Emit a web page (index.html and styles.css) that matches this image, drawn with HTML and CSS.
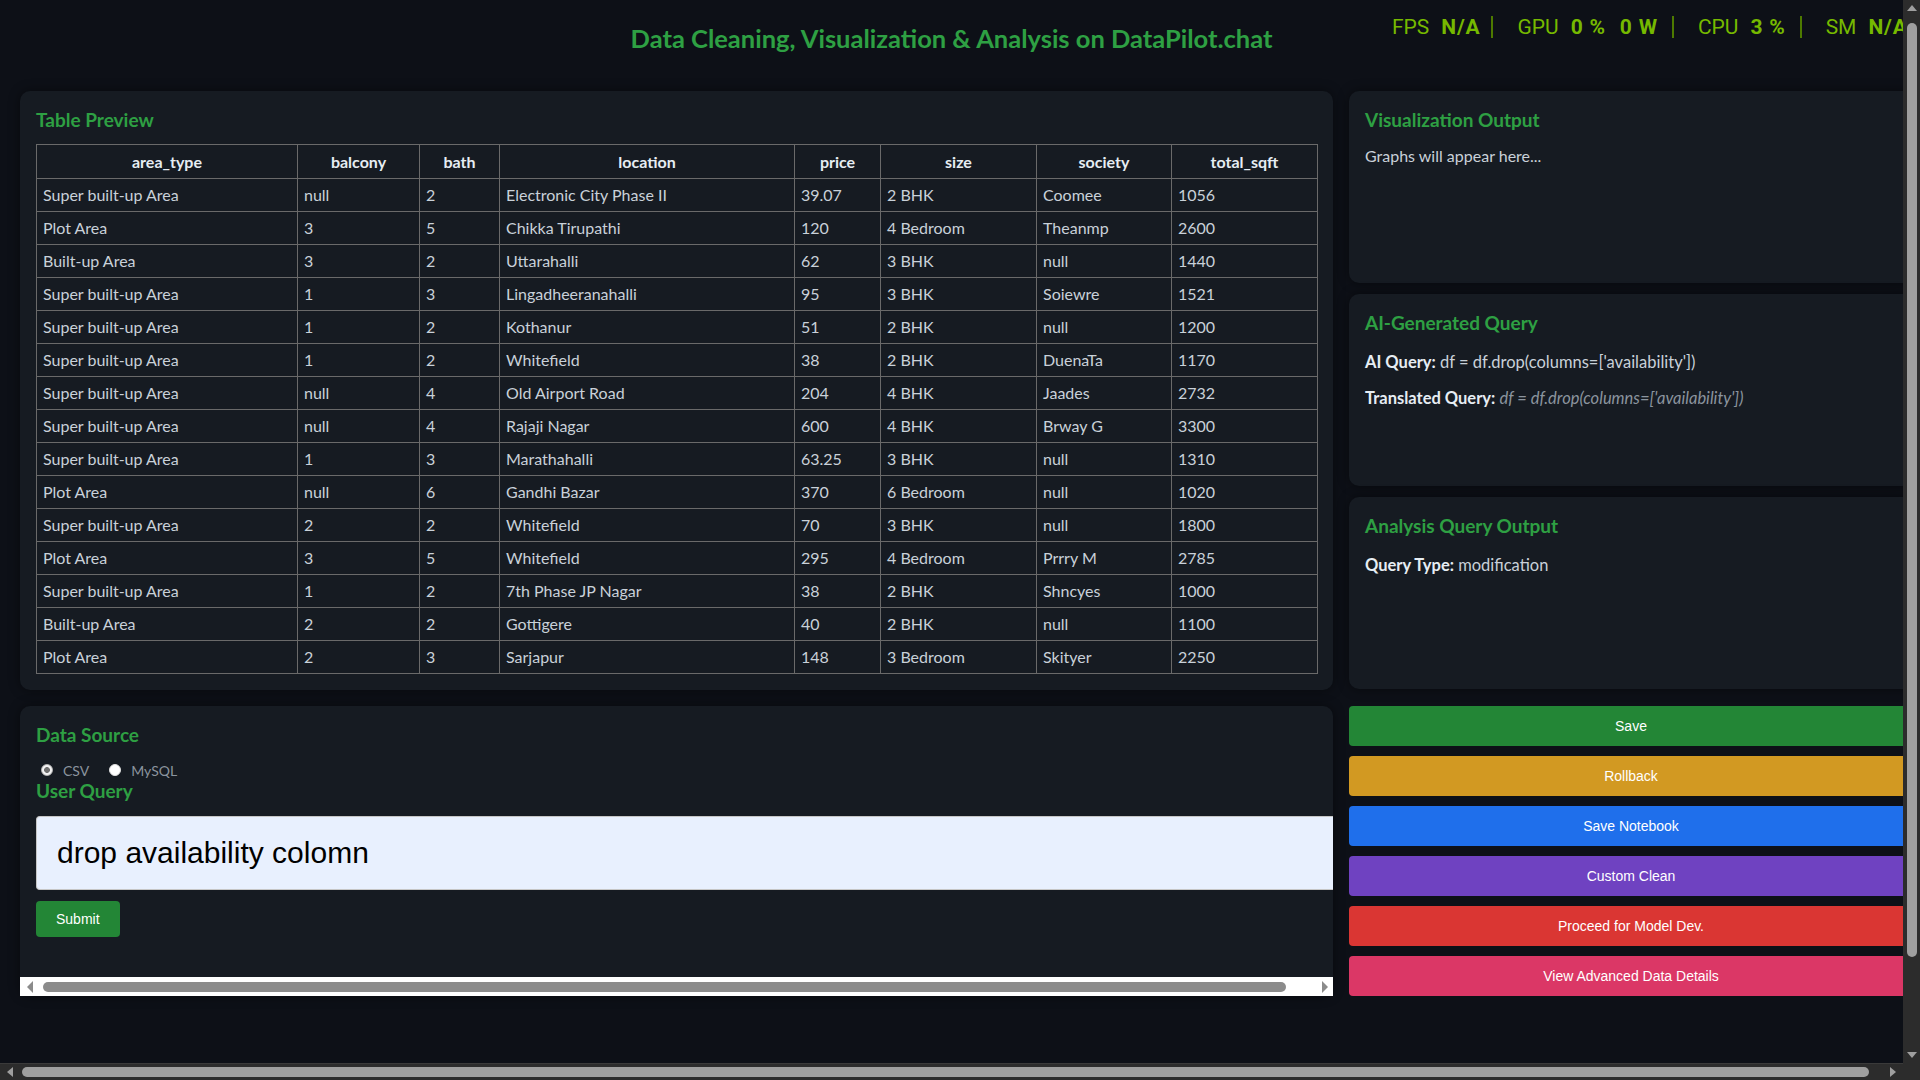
FILE: index.html
```html
<!DOCTYPE html>
<html lang="en">
<head>
<meta charset="utf-8">
<title>DataPilot</title>
<link rel="stylesheet" href="styles.css">
</head>
<body>
<div class="overlay">
  <span class="lbl">FPS</span><span class="val">N/A</span><span class="sep sep-first"></span>
  <span class="lbl">GPU</span><span class="val">0 %</span><span class="val">0 W</span><span class="sep"></span>
  <span class="lbl">CPU</span><span class="val">3 %</span><span class="sep"></span>
  <span class="lbl">SM</span><span class="val">N/A</span>
</div>
<header class="header">
  <h1 class="page-title">Data Cleaning, Visualization &amp; Analysis on DataPilot.chat</h1>
</header>
<main class="main">
  <div class="left-col">
    <section class="card table-card">
      <h3 class="card-title">Table Preview</h3>
      <table class="data-table">
        <colgroup>
          <col class="c1"><col class="c2"><col class="c3"><col class="c4"><col class="c5"><col class="c6"><col class="c7"><col class="c8">
        </colgroup>
        <thead>
          <tr><th>area_type</th><th>balcony</th><th>bath</th><th>location</th><th>price</th><th>size</th><th>society</th><th>total_sqft</th></tr>
        </thead>
        <tbody>
          <tr><td>Super built-up Area</td><td>null</td><td>2</td><td>Electronic City Phase II</td><td>39.07</td><td>2 BHK</td><td>Coomee</td><td>1056</td></tr>
          <tr><td>Plot Area</td><td>3</td><td>5</td><td>Chikka Tirupathi</td><td>120</td><td>4 Bedroom</td><td>Theanmp</td><td>2600</td></tr>
          <tr><td>Built-up Area</td><td>3</td><td>2</td><td>Uttarahalli</td><td>62</td><td>3 BHK</td><td>null</td><td>1440</td></tr>
          <tr><td>Super built-up Area</td><td>1</td><td>3</td><td>Lingadheeranahalli</td><td>95</td><td>3 BHK</td><td>Soiewre</td><td>1521</td></tr>
          <tr><td>Super built-up Area</td><td>1</td><td>2</td><td>Kothanur</td><td>51</td><td>2 BHK</td><td>null</td><td>1200</td></tr>
          <tr><td>Super built-up Area</td><td>1</td><td>2</td><td>Whitefield</td><td>38</td><td>2 BHK</td><td>DuenaTa</td><td>1170</td></tr>
          <tr><td>Super built-up Area</td><td>null</td><td>4</td><td>Old Airport Road</td><td>204</td><td>4 BHK</td><td>Jaades</td><td>2732</td></tr>
          <tr><td>Super built-up Area</td><td>null</td><td>4</td><td>Rajaji Nagar</td><td>600</td><td>4 BHK</td><td>Brway G</td><td>3300</td></tr>
          <tr><td>Super built-up Area</td><td>1</td><td>3</td><td>Marathahalli</td><td>63.25</td><td>3 BHK</td><td>null</td><td>1310</td></tr>
          <tr><td>Plot Area</td><td>null</td><td>6</td><td>Gandhi Bazar</td><td>370</td><td>6 Bedroom</td><td>null</td><td>1020</td></tr>
          <tr><td>Super built-up Area</td><td>2</td><td>2</td><td>Whitefield</td><td>70</td><td>3 BHK</td><td>null</td><td>1800</td></tr>
          <tr><td>Plot Area</td><td>3</td><td>5</td><td>Whitefield</td><td>295</td><td>4 Bedroom</td><td>Prrry M</td><td>2785</td></tr>
          <tr><td>Super built-up Area</td><td>1</td><td>2</td><td>7th Phase JP Nagar</td><td>38</td><td>2 BHK</td><td>Shncyes</td><td>1000</td></tr>
          <tr><td>Built-up Area</td><td>2</td><td>2</td><td>Gottigere</td><td>40</td><td>2 BHK</td><td>null</td><td>1100</td></tr>
          <tr><td>Plot Area</td><td>2</td><td>3</td><td>Sarjapur</td><td>148</td><td>3 Bedroom</td><td>Skityer</td><td>2250</td></tr>
        </tbody>
      </table>
    </section>
    <section class="card source-card">
      <h3 class="card-title">Data Source</h3>
      <div class="radios">
        <label class="radio-label"><input type="radio" name="src" class="radio" checked> CSV</label>
        <label class="radio-label"><input type="radio" name="src" class="radio"> MySQL</label>
      </div>
      <h3 class="card-title">User Query</h3>
      <input class="query-input" type="text" value="drop availability colomn">
      <button class="submit-btn">Submit</button>
      <div class="hscroll">
        <svg class="arrow" width="8" height="12" viewBox="0 0 8 12"><path d="M7 0 L7 12 L1 6 Z" fill="#8b8b8b"/></svg>
        <div class="hscroll-track"><div class="inner-thumb"></div></div>
        <svg class="arrow" width="8" height="12" viewBox="0 0 8 12"><path d="M1 0 L1 12 L7 6 Z" fill="#8b8b8b"/></svg>
      </div>
    </section>
  </div>
  <div class="right-col">
    <section class="card side-card">
      <h3 class="card-title">Visualization Output</h3>
      <p class="vis-text">Graphs will appear here...</p>
    </section>
    <section class="card side-card">
      <h3 class="card-title">AI-Generated Query</h3>
      <p class="line first"><strong>AI Query:</strong> df = df.drop(columns=['availability'])</p>
      <p class="line"><strong>Translated Query:</strong> <em class="muted">df = df.drop(columns=['availability'])</em></p>
    </section>
    <section class="card side-card">
      <h3 class="card-title">Analysis Query Output</h3>
      <p class="line first"><strong>Query Type:</strong> modification</p>
    </section>
    <div class="actions">
      <button class="act act-save">Save</button>
      <button class="act act-rollback">Rollback</button>
      <button class="act act-notebook">Save Notebook</button>
      <button class="act act-custom">Custom Clean</button>
      <button class="act act-proceed">Proceed for Model Dev.</button>
      <button class="act act-advanced">View Advanced Data Details</button>
    </div>
  </div>
</main>

<div class="page-vscroll">
  <svg class="arrow" width="10" height="8" viewBox="0 0 10 8"><path d="M0 7 L10 7 L5 1 Z" fill="#9f9f9f"/></svg>
  <div class="vtrack"><div class="vthumb"></div></div>
  <svg class="arrow" width="10" height="8" viewBox="0 0 10 8"><path d="M0 1 L10 1 L5 7 Z" fill="#9f9f9f"/></svg>
</div>
<div class="page-hscroll">
  <svg class="arrow" width="8" height="10" viewBox="0 0 8 10"><path d="M7 0 L7 10 L1 5 Z" fill="#9f9f9f"/></svg>
  <div class="htrack"><div class="hthumb"></div></div>
  <svg class="arrow" width="8" height="10" viewBox="0 0 8 10"><path d="M1 0 L1 10 L7 5 Z" fill="#9f9f9f"/></svg>
</div>
<div class="scroll-corner"></div>
</body>
</html>
```
FILE: styles.css
```css
html {
  color-scheme: dark;
}

body {
  margin: 0;
  background: #0d1017;
  color: #c9d1d9;
  font-family: Lato, "Noto Sans", sans-serif;
  font-size: 16px;
  overflow: hidden;
  height: 1080px;
}

.overlay {
  position: absolute;
  top: 15px;
  left: 1392px;
  display: flex;
  align-items: center;
  font-family: Roboto, "DejaVu Sans", sans-serif;
  font-size: 21px;
  color: #76b900;
  white-space: nowrap;
  z-index: 5;
}

.overlay .lbl {
  margin-right: 12px;
}

.overlay .val {
  font-weight: 700;
  margin-right: 14px;
  letter-spacing: 0.8px;
}

.overlay .sep {
  width: 2px;
  height: 22px;
  background: #4d7a00;
  margin-right: 24px;
}

.overlay .sep-first {
  margin-left: -3px;
}

.header {
  padding-top: 18px;
  margin-right: 17px;
}

.page-title {
  margin: 0;
  text-align: center;
  color: #2ea043;
  font-size: 25.5px;
  line-height: 40px;
  font-weight: 700;
}

.main {
  display: grid;
  grid-template-columns: 1313px 564px;
  column-gap: 16px;
  width: max-content;
  padding: 33px 20px 20px;
}

.left-col {
  display: flex;
  flex-direction: column;
  gap: 16px;
}

.right-col {
  display: flex;
  flex-direction: column;
  gap: 11px;
}

.card {
  background: #161b22;
  border-radius: 10px;
  box-shadow: 0 0 12px rgba(0, 0, 0, 0.45);
  padding: 18px 16px 16px;
}

.card-title {
  margin: 0;
  color: #2ea043;
  font-size: 19px;
  line-height: 22px;
  font-weight: 700;
}

.table-card .card-title {
  margin-bottom: 13px;
}

.data-table {
  width: 100%;
  table-layout: fixed;
  border-collapse: collapse;
  border: 1px solid #6a6a6a;
}

.c1 { width: 261px; }
.c2 { width: 122px; }
.c3 { width: 80px; }
.c4 { width: 295px; }
.c5 { width: 86px; }
.c6 { width: 156px; }
.c7 { width: 135px; }
.c8 { width: 146px; }

.data-table th,
.data-table td {
  border: 1px solid #6a6a6a;
  padding: 6px 6px;
  line-height: 20px;
  font-size: 16px;
  white-space: nowrap;
  overflow: hidden;
}

.data-table th {
  color: #e6edf3;
  font-weight: 700;
  text-align: center;
  padding-top: 7px;
}

.data-table td {
  text-align: left;
}

.source-card {
  color-scheme: light;
  padding-bottom: 0;
}

.radios {
  display: flex;
  align-items: center;
  margin-top: 14px;
  height: 20px;
}

.radio-label {
  display: flex;
  align-items: center;
  color: #8b949e;
  font-size: 14px;
  margin-right: 15px;
}

.radio {
  appearance: none;
  width: 12px;
  height: 12px;
  margin: 0 10px 0 5px;
  border-radius: 50%;
  background: #ffffff;
  border: 1px solid #e0e0e0;
}

.radio:checked {
  background: radial-gradient(circle, #707070 0 2.6px, #f2f2f2 3.2px);
  border: 1px solid #b5b5b5;
}

.query-input {
  display: block;
  margin-top: 14px;
  width: calc(100% + 16px);
  height: 74px;
  box-sizing: border-box;
  padding: 0 20px;
  background: #e8f0fe;
  border: 1px solid #c6c6c6;
  border-right: none;
  border-radius: 4px 0 0 4px;
  font-family: "Liberation Sans", Arial, sans-serif;
  font-size: 30px;
  color: #000;
}

.submit-btn {
  display: block;
  margin-top: 11px;
  height: 36px;
  padding: 0 20px;
  border: none;
  border-radius: 4px;
  background: #238636;
  color: #fff;
  font-family: "Liberation Sans", Arial, sans-serif;
  font-size: 14px;
}

.hscroll {
  display: flex;
  align-items: center;
  height: 19px;
  margin: 40px -16px 0;
  padding: 0 4px 0 6px;
  background: #ffffff;
}

.hscroll-track {
  flex: 1;
  margin: 0 6px 0 9px;
}

.inner-thumb {
  height: 10px;
  width: 1243px;
  border-radius: 5px;
  background: #8b8b8b;
}

.side-card {
  height: 192px;
  box-sizing: border-box;
}

.vis-text {
  margin: 14px 0 0;
  line-height: 21px;
  color: #c9d1d9;
}

.line {
  margin: 15px 0 0;
  line-height: 21px;
  font-size: 16.5px;
  color: #c9d1d9;
}

.line.first {
  margin-top: 18px;
}

.line strong {
  color: #e6edf3;
  font-weight: 700;
}

.muted {
  color: #8b949e;
}

.actions {
  display: flex;
  flex-direction: column;
  gap: 10px;
  margin-top: 6px;
}

.act {
  height: 40px;
  border: none;
  border-radius: 4px;
  color: #fff;
  font-family: "Liberation Sans", Arial, sans-serif;
  font-size: 14px;
}

.act-save { background: #238636; }
.act-rollback { background: #d29922; }
.act-notebook { background: #1f6feb; }
.act-custom { background: #6f42c1; }
.act-proceed { background: #da3633; }
.act-advanced { background: #db3766; }

.page-vscroll {
  position: fixed;
  top: 0;
  right: 0;
  width: 17px;
  height: 1063px;
  background: #2c2c2c;
  display: flex;
  flex-direction: column;
  align-items: center;
  padding: 4px 0;
  box-sizing: border-box;
  z-index: 10;
}

.vtrack {
  flex: 1;
  width: 100%;
  display: flex;
  justify-content: center;
  padding: 11px 0 0;
}

.vthumb {
  width: 10px;
  height: 934px;
  border-radius: 5px;
  background: #9f9f9f;
}

.page-hscroll {
  position: fixed;
  left: 0;
  bottom: 0;
  width: 1903px;
  height: 17px;
  background: #2c2c2c;
  border-top: 1px solid #3a3a3a;
  box-sizing: border-box;
  display: flex;
  align-items: center;
  padding: 0 6px;
  z-index: 10;
}

.htrack {
  flex: 1;
  margin: 0 8px 0 8px;
}

.hthumb {
  width: 1847px;
  height: 10px;
  border-radius: 5px;
  background: #9f9f9f;
}

.scroll-corner {
  position: fixed;
  right: 0;
  bottom: 0;
  width: 17px;
  height: 17px;
  background: #2c2c2c;
  z-index: 10;
}

.arrow {
  display: block;
  flex: none;
}
```
